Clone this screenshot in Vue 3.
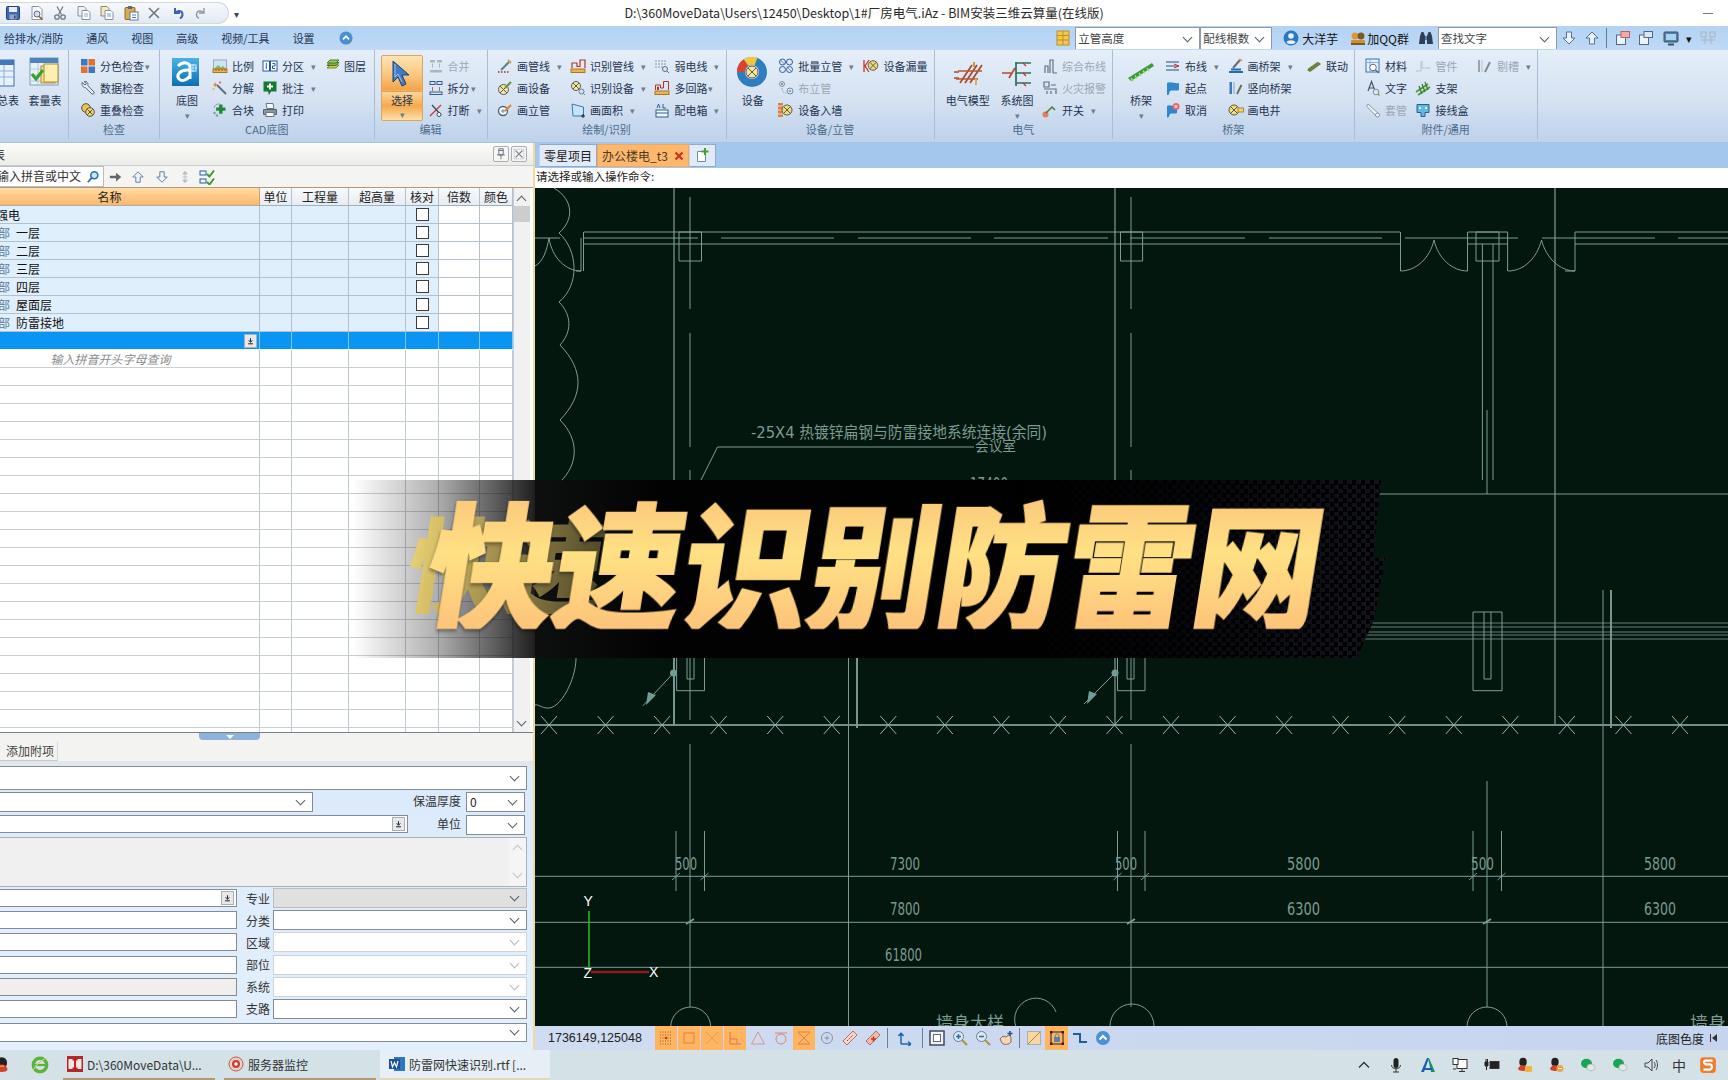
<script setup>
const S = {
  save: '<rect x="1.5" y="1.5" width="13" height="13" rx="1" fill="#4467ad" stroke="#24407c"/><rect x="4" y="2" width="8" height="5" fill="#e8eef8"/><rect x="4.5" y="9.5" width="7" height="5" fill="#8fa6cf"/><rect x="9" y="10.500" width="1.500" height="3" fill="#24407c"/>',
  preview: '<path d="M3 1.500h7l3 3v10H3z" fill="#fff" stroke="#8a94a3"/><circle cx="8" cy="9" r="3" fill="#cfe2f5" stroke="#5d6c80"/><path d="M10 11.500l3.500 3" stroke="#7a5b24" stroke-width="1.600"/>',
  cut: '<path d="M5 1.500l4.500 8M11 1.500l-4.500 8" stroke="#6f7883" stroke-width="1.200" fill="none"/><circle cx="5" cy="12" r="2.200" fill="none" stroke="#6f7883" stroke-width="1.300"/><circle cx="11" cy="12" r="2.200" fill="none" stroke="#6f7883" stroke-width="1.300"/>',
  copy: '<path d="M2 1.500h6l2 2V11H2z" fill="#eef2f6" stroke="#8892a0"/><path d="M6 5.500h6l2 2v7H6z" fill="#fff" stroke="#8892a0"/><path d="M8 9h4M8 11h4" stroke="#9aa6b4"/>',
  copy2: '<path d="M2 1.500h6l2 2V11H2z" fill="#f2e7bf" stroke="#8d8a70"/><path d="M6 5.500h6l2 2v7H6z" fill="#fff" stroke="#8892a0"/><path d="M8 9h4M8 11h4" stroke="#6a9acb"/>',
  paste: '<rect x="2" y="2.500" width="10" height="12" rx="1" fill="#d9ac4d" stroke="#8a6a24"/><rect x="5" y="1" width="4" height="3" fill="#5a6a78"/><rect x="7" y="7" width="8" height="8" fill="#fff" stroke="#5a7ca8"/><path d="M9 10h4M9 12.500h4" stroke="#5a7ca8"/>',
  del: '<path d="M3 3l10 10M13 3L3 13" stroke="#6d7885" stroke-width="1.600"/>',
  undo: '<path d="M5 3v5h5M5.500 7.500C8 5 12 5.500 12.500 9c.2 2-1 3.500-2.500 4.500" fill="none" stroke="#3b66a8" stroke-width="2"/>',
  redo: '<path d="M11 3v5H6M10.500 7.500C8 5 4 5.500 3.500 9c-.2 2 1 3.500 2.500 4.500" fill="none" stroke="#8f9aa8" stroke-width="1.400"/>',
  grid4: '<rect x="1" y="1" width="6.500" height="6.500" fill="#3d78c4"/><rect x="8.500" y="1" width="6.500" height="6.500" fill="#e5702b"/><rect x="1" y="8.500" width="6.500" height="6.500" fill="#e5702b"/><rect x="8.500" y="8.500" width="6.500" height="6.500" fill="#3d78c4"/>',
  wrench: '<path d="M2 2.500l3 2.500 1.500-1.500L4 1.500c2.500-.7 4.500 1.500 3.800 4L14 12c.7 1.500-.8 2.800-2 2L5.500 7.700C3.500 8 1.500 5.500 2 2.500z" fill="#e4ebf3" stroke="#56677c"/>',
  overlap: '<circle cx="6" cy="6" r="4.300" fill="#e8c65a" stroke="#52513a"/><circle cx="10" cy="10" r="4.300" fill="#f0d676" stroke="#52513a"/><path d="M7.500 7.500l5 5M12.500 7.500l-5 5" stroke="#52513a"/>',
  scale: '<rect x="1.500" y="2" width="13" height="9" fill="#cfe3f6" stroke="#9aa7b5"/><path d="M2 11l4-4 3 2.500 2-1.500 3 3z" fill="#8fb36a"/><rect x="1" y="11" width="14" height="3.500" fill="#eab54a" stroke="#a8782a"/><path d="M4 11v2M7 11v2M10 11v2M13 11v2" stroke="#8a5f1c"/>',
  wand: '<path d="M5 5l9 9" stroke="#5f6e80" stroke-width="2"/><path d="M3 2l1 2 2 .5-2 1-1 2-.8-2L1 4.500l1.500-.5z" fill="#e8862e"/><circle cx="8" cy="2.500" r=".9" fill="#d9432c"/><circle cx="1.500" cy="9" r=".9" fill="#e8b32e"/>',
  block: '<path d="M6 4h4v3.500h3.500v4H10V15H6v-3.500H2.500v-4H6z" fill="#208a3a" transform="translate(2 -1) scale(.85)"/><circle cx="2.500" cy="11" r="1.300" fill="#8d9aa8"/><circle cx="5" cy="13.500" r="1.300" fill="#8d9aa8"/><path d="M2 6c.5-3 3-4.500 6-4" fill="none" stroke="#8d9aa8"/>',
  nums: '<rect x="1" y="3" width="6.500" height="10" fill="#fff" stroke="#24579c"/><rect x="8.500" y="3" width="6.500" height="10" fill="#fff" stroke="#24579c"/><path d="M4.300 5v6M10.500 5.500h2.500v2.500h-2.500v2.500H13" fill="none" stroke="#24579c"/>',
  note: '<path d="M1.500 1.500h13v10H9l-2 3.500-1-3.500H1.500z" fill="#137a2e"/><path d="M7 3.500h2v2h2v2H9v2H7v-2H5v-2h2z" fill="#fff"/>',
  print: '<path d="M4 1.500h7l1 5H5z" fill="#f5f7fa" stroke="#6b7684"/><path d="M1.500 7.500h13v5h-13z" fill="#8a96a4" stroke="#566270"/><rect x="4" y="10.500" width="8" height="4" fill="#fff" stroke="#6b7684"/>',
  layer: '<path d="M3 10l3-3h9l-3 3z" fill="#e6c34a" stroke="#6f8a36"/><path d="M3 7.500l3-3h9l-3 3z" fill="#79b54a" stroke="#46762c"/><path d="M3 5l3-3h9l-3 3z" fill="#a4c95a" stroke="#46762c"/>',
  merge: '<rect x="2" y="2" width="5" height="2.500" fill="#a5adb7"/><rect x="9" y="2" width="5" height="2.500" fill="#a5adb7"/><rect x="2" y="12" width="12" height="2.500" fill="#a5adb7"/><path d="M4.500 5.500v4M11.500 5.500v4" stroke="#a5adb7"/>',
  split: '<rect x="2" y="1.500" width="5" height="3" fill="none" stroke="#2f5d98"/><rect x="9" y="1.500" width="5" height="3" fill="none" stroke="#2f5d98"/><path d="M4.500 7v4M11.500 7v4" stroke="#c2701e"/><rect x="2" y="12" width="12" height="2.500" fill="none" stroke="#2f5d98"/>',
  brk: '<path d="M2 14L13 3" stroke="#c5372a" stroke-width="1.300"/><path d="M4 3l9 10" stroke="#3c4a5c" stroke-width="1.300"/><circle cx="11" cy="12.500" r="2" fill="#fff" stroke="#3c4a5c"/>',
  pipe: '<path d="M4 12L13 3" stroke="#5b7f94" stroke-width="2"/><path d="M1 14h12" stroke="#a0272c" stroke-dasharray="1.500 1.500" stroke-width="1.500"/><path d="M11 2l3 3" stroke="#d9a23a" stroke-width="2"/>',
  dev: '<circle cx="6.500" cy="9.500" r="5" fill="#f0e3a5" stroke="#5b6058"/><path d="M3 6l7 7M10 6l-7 7" stroke="#5b6058"/><path d="M8 8L14 2" stroke="#6a9140" stroke-width="2"/>',
  riser: '<circle cx="6" cy="9" r="4.500" fill="#fff" stroke="#4f6175" stroke-width="1.300"/><circle cx="6" cy="9" r="1.800" fill="#8ea4ba"/><path d="M8 9l6-6" stroke="#d18a34" stroke-width="2"/>',
  ident: '<rect x="1" y="11" width="14" height="3.500" fill="#eab54a" stroke="#a8782a"/><path d="M2 10V5h5v3.500h3V2h5v8" fill="none" stroke="#b0372a" stroke-width="1.200"/>',
  identdev: '<circle cx="6" cy="6" r="4.500" fill="#f0e3a5" stroke="#5b6058"/><path d="M3 3l6 6M9 3l-6 6" stroke="#5b6058"/><circle cx="11.500" cy="11.500" r="2.500" fill="#cfe2f5" stroke="#6f7f92"/><path d="M13 13l2 2" stroke="#6f7f92"/>',
  area: '<path d="M2 2l11.500 3v9H3z" fill="#c8e2f7" stroke="#2f7fb4"/><path d="M13 12v4M11 14h4" stroke="#222"/>',
  weak: '<path d="M1 3h12M1 6h12M1 9h8" stroke="#8795a5" stroke-dasharray="2 1"/><circle cx="11" cy="11" r="2.500" fill="#dbe8f5" stroke="#5d6c80"/><path d="M13 13l2 2" stroke="#5d6c80"/>',
  circuit: '<rect x="1" y="11" width="14" height="3.500" fill="#eab54a" stroke="#a8782a"/><path d="M1.500 10V5h5v3h3V1.500h5V10M3.500 10V7h1v3" fill="none" stroke="#b0372a"/>',
  box: '<rect x="2" y="8" width="12" height="7" fill="#f3f8fd" stroke="#2d5f96"/><path d="M2 11h12" stroke="#2d5f96"/><path d="M3 6l1.500-4L6 6M9 2v4h3" fill="none" stroke="#2d5f96"/>',
  batch: '<circle cx="4.500" cy="4" r="3" fill="none" stroke="#2d5f96"/><circle cx="11.500" cy="4" r="3" fill="none" stroke="#2d5f96"/><circle cx="4.500" cy="11.500" r="3" fill="none" stroke="#2d5f96"/><circle cx="11.500" cy="11.500" r="3" fill="none" stroke="#2d5f96"/><path d="M2.500 2l4 4M9.500 9.500l4 4" stroke="#2d5f96" stroke-width=".7"/>',
  lay: '<circle cx="4" cy="4" r="2.500" fill="none" stroke="#7d8793"/><path d="M2.500 2.500l3 3M5.500 2.500l-3 3" stroke="#7d8793"/><circle cx="12" cy="11" r="3" fill="none" stroke="#5f7fa0"/><circle cx="12" cy="11" r="1" fill="#5f7fa0"/><path d="M4 8c0 3 1 5 4 5" fill="none" stroke="#7d8793" stroke-dasharray="1 1"/>',
  wall: '<rect x="0" y="1" width="5" height="14" fill="#d5824c"/><path d="M0 4h5M0 8h5M0 12h5" stroke="#f3d9c3"/><circle cx="9" cy="8" r="5" fill="#f0d976" stroke="#5b6058"/><path d="M5.500 4.500l7 7M12.500 4.500l-7 7" stroke="#5b6058"/>',
  leak: '<path d="M1 2v12M6 2L2 8l4 6" fill="none" stroke="#c5372a" stroke-width="1.300"/><circle cx="10" cy="7.500" r="4.800" fill="#f0d976" stroke="#5b6058"/><path d="M6.500 4l7 7M13.500 4l-7 7" stroke="#5b6058"/>',
  wiring: '<path d="M3 15V8h3v7M8 15V2h3v13M11 15h4" fill="none" stroke="#4b5b6e" stroke-width="1.200"/>',
  fire: '<path d="M2 2h5v5H2zM9 5h5M2 9h12v5M5 14V11M9 14v-3" fill="none" stroke="#4b5b6e" stroke-width="1.200"/>',
  switch: '<circle cx="3.500" cy="12.500" r="3" fill="#e77a62"/><path d="M4 11L10 5l3 3" fill="none" stroke="#4a7a3b" stroke-width="1.500"/>',
  run: '<path d="M1 4h13M1 8h13M1 12h13" stroke="#2b4f7a" stroke-width="1.200"/><path d="M9 6l5 2-5 2" fill="none" stroke="#c5372a"/>',
  flag: '<path d="M2 3c4-2 8 1 12 0v7c-3 1.500-6-.5-9 1l-1.500 4H2z" fill="#2f88cb"/>',
  cancel: '<path d="M2 4c3-2 6 1 10 0v7c-3 1.500-5-.5-7 1l-1.500 3.500H2z" fill="#2f88cb"/><circle cx="11" cy="4.500" r="3.500" fill="#e8636a"/><path d="M9.500 3l3 3M12.500 3l-3 3" stroke="#fff"/>',
  tray: '<path d="M1 14h14M3 11.500h10" stroke="#1f6cb3" stroke-width="1.800"/><path d="M5 10l7-8" stroke="#5d6c80" stroke-width="2"/><path d="M11 1l3 2" stroke="#d9a23a" stroke-width="2"/>',
  vtray: '<rect x="1.500" y="2" width="2.500" height="12" fill="#3f79bd"/><rect x="5" y="2" width="2" height="12" fill="#a5c6e8"/><path d="M9 14l4.500-9" stroke="#6d6d55" stroke-width="2"/>',
  well: '<circle cx="6" cy="8" r="5" fill="#f2dc7e" stroke="#575a47"/><path d="M2.500 4.500l7 7M9.500 4.500l-7 7" stroke="#575a47"/><rect x="10" y="6" width="5.500" height="4" fill="#f5d564" stroke="#a68a34"/>',
  link: '<path d="M1 12l11-8 3 2L4 14z" fill="#7d6a38"/><path d="M2 11l10-7M3.500 12.500L13.500 5" stroke="#5da049" stroke-width="1"/>',
  mat: '<rect x="1" y="1" width="13" height="13" fill="#e7f1fb" stroke="#3c6fa8"/><path d="M1 4.500h13M5 1v13" stroke="#8bb0d6"/><circle cx="8" cy="9.500" r="3.300" fill="#fff" stroke="#5f6d7d"/><path d="M10.500 12l3.500 3" stroke="#5f6d7d" stroke-width="1.500"/>',
  fit: '<path d="M1 13h5V3M7 3v7h8" fill="none" stroke="#b1bac5"/>',
  chisel: '<rect x="1" y="2" width="2" height="12" fill="#8e99a6"/><rect x="4" y="2" width="2" height="12" fill="#cbd3dc"/><path d="M8 14l5-10" stroke="#777b78" stroke-width="2"/>',
  txt: '<path d="M3 11L6.500 1.500 10 11M4.500 8h4" fill="none" stroke="#45566b" stroke-width="1.200"/><circle cx="11" cy="12" r="2.800" fill="#dbe8f5" stroke="#7f8c9a"/><path d="M13 14l1.500 1.500" stroke="#a58a3c" stroke-width="1.500"/>',
  rack: '<path d="M1 12L13 4M3 15L15 7" stroke="#4b9a3c" stroke-width="1.800"/><path d="M4 6l3 8M7 4l3 8M10 2l3 8" stroke="#3c7f2f" stroke-width="1.300"/>',
  sleeve: '<path d="M3 2l11 10-2.500 2.500L1.500 4z" fill="#f5f7fa" stroke="#7c8793"/><circle cx="12.500" cy="13" r="2" fill="#fff" stroke="#7c8793"/>',
  jbox: '<path d="M2 2.500h12v8H10v4H6v-4H2z" fill="#62bad8" stroke="#2d5f96"/><circle cx="5" cy="6" r="1" fill="#fff"/><circle cx="11" cy="6" r="1" fill="#fff"/>',
  search: '<circle cx="9.500" cy="6" r="4" fill="#cfe4f7" stroke="#1f6fb6" stroke-width="1.800"/><path d="M6.500 9L2 14" stroke="#1f6fb6" stroke-width="2"/>',
  arrR: '<path d="M1 6.500h7V3l6 5-6 5V9.500H1z" fill="#5e6873"/>',
  arrU: '<path d="M8 2l6 6h-3.500v6h-5V8H2z" fill="#eaf2fa" stroke="#53749a"/>',
  arrD: '<path d="M8 14l6-6h-3.500V2h-5v6H2z" fill="#eaf2fa" stroke="#53749a"/>',
  move: '<path d="M8 1.500l2.500 3h-5zM8 14.500l2.500-3h-5zM5 8h6M8 4v8" stroke="#b6bec8" fill="#b6bec8"/>',
  checks: '<rect x="1" y="2" width="6" height="4" fill="none" stroke="#1e62a4"/><rect x="1" y="10" width="6" height="4" fill="none" stroke="#1e62a4"/><path d="M8 5l2.500 2.500L15 1.500M8 13l2.500 2.500L15 9.500" fill="none" stroke="#3f9a2f" stroke-width="2"/>',
  user: '<circle cx="8" cy="8" r="7.500" fill="#2a78c4"/><circle cx="8" cy="6" r="2.800" fill="#e8f2fb"/><path d="M3.500 12.500C4.500 9.500 11.500 9.500 12.500 12.500 10 14.500 6 14.500 3.500 12.500z" fill="#e8f2fb"/>',
  qq: '<circle cx="5" cy="6" r="3.500" fill="#d99a3a"/><circle cx="11" cy="6" r="3.500" fill="#7d5a22"/><rect x="1" y="10" width="14" height="4.500" rx="1" fill="#c9902f"/><rect x="1" y="13" width="14" height="2" fill="#7d5a22"/>',
  bino: '<path d="M2 6l1.500-4h2L7 6v8H1zM14 6l-1.500-4h-2L9 6v8h6z" fill="#2f3f57"/><rect x="7" y="6" width="2" height="4" fill="#5b7fa8"/>',
  win1: '<rect x="1.500" y="5" width="9" height="9.500" fill="#eef3f8" stroke="#4e6a8d"/><rect x="6" y="1.500" width="8.500" height="6" fill="#f2a9a9" stroke="#b26666"/>',
  win2: '<rect x="1.500" y="5" width="9" height="9.500" fill="#eef3f8" stroke="#4e6a8d"/><rect x="6" y="1.500" width="8.500" height="6" fill="#dbe6f0" stroke="#4e6a8d"/>',
  mon: '<rect x="1" y="2" width="14" height="10" rx="1" fill="#597fa8" stroke="#3c4f66"/><rect x="3" y="4" width="10" height="6" fill="#a8d4f3"/><path d="M5 14.500h6" stroke="#3c4f66" stroke-width="2"/>',
  off: '<path d="M1 2h5v5H1zM10 2h5v5h-5zM1 10h14M5 7v7M11 7v7" fill="none" stroke="#aab4c0"/>',
  comboIcon: '<rect x="2" y="1" width="12" height="14" fill="#f2c94f" stroke="#c28c26"/><path d="M2 5.500h12M2 10h12M8 1v14" stroke="#c28c26"/>',
  close: '<path d="M4 4l8 8M12 4l-8 8" stroke="#c9341f" stroke-width="2.600"/>',
  newTab: '<path d="M2.500 3.500h8v10h-8z" fill="#fff" stroke="#6d8daf"/><path d="M10 0v7M6.500 3.500h7" stroke="#4a9b3a" stroke-width="2"/>',
  pin: '<path d="M5.500 2h5v7h-5zM3.500 9h9M8 9v5M5.500 4h5" fill="none" stroke="#5d6875"/>',
  xbox: '<path d="M4 4l8 8M12 4l-8 8" stroke="#7e8996" stroke-width="1.300"/><path d="M2.500 2.500h11v11h-11z" fill="none" stroke="#a8b2bd" stroke-dasharray="1.500 1"/>',
}
const L = {
  total: '<rect x="1" y="3" width="30" height="26" fill="#e7f1fb" stroke="#3c6fa8"/><rect x="1" y="3" width="30" height="5" fill="#3f79bd"/><path d="M1 14h30M1 20h30M11 8v21M21 8v21" stroke="#8bb0d6"/><path d="M20 11h-9v12h9M11 17h7" fill="none" stroke="#222" stroke-width="2.500" transform="translate(-4 -2)"/>',
  list: '<rect x="1" y="1" width="28" height="27" fill="#e9f1f8" stroke="#7b9bbd"/><rect x="1" y="1" width="28" height="5" fill="#4e84b8"/><path d="M1 12h28M1 18h28M1 24h28M9 6v22" stroke="#b4c9dc"/><rect x="12" y="9" width="14" height="17" fill="#f4e499" stroke="#b08a2c"/><rect x="15" y="7" width="14" height="18" fill="#fbefb3" stroke="#b08a2c"/><path d="M3 17l4 5 7-9" fill="none" stroke="#37a02f" stroke-width="3"/>',
  cad: '<defs><linearGradient id="cadg" x1="0" y1="0" x2="0" y2="1"><stop offset="0" stop-color="#4ab2e3"/><stop offset="1" stop-color="#0d6fb4"/></linearGradient></defs><rect x="1" y="1" width="27" height="28" fill="url(#cadg)"/><path d="M7 9c5-5 13-4 12 3v10M19 13C9 12 5 18 8 22c3 3 8 1 11-3" fill="none" stroke="#fff" stroke-width="3"/><path d="M18 11h8M22 7v8" stroke="#bfe5f7"/><rect x="19" y="8" width="6" height="6" fill="none" stroke="#dff3fb"/>',
  cursor: '<path d="M7 2v21l5-5 4 9 4-2-4-9h7z" fill="#3f7cc6" stroke="#1f3f6f"/><path d="M9 5v13l3-3 4 8" fill="none" stroke="#9cc4ea"/>',
  device: '<circle cx="15" cy="15" r="11" fill="none" stroke="#2e7dbf" stroke-width="8"/><path d="M4 15a11 11 0 0 1 5-9.500" fill="none" stroke="#d8452f" stroke-width="8"/><path d="M9 5.500A11 11 0 0 1 19 4.500" fill="none" stroke="#f2c63e" stroke-width="8"/><circle cx="15" cy="15" r="6" fill="#f5e7a3" stroke="#565a4a"/><path d="M11 11l8 8M19 11l-8 8" stroke="#565a4a"/>',
  model: '<path d="M2 15h5M2 21h5M8 26L20 8M13 26L25 8M18 26L30 8" stroke="#a84a2a" stroke-width="1.700" fill="none"/><path d="M6 14h24M4 22h22" stroke="#b65a32" stroke-width="1.700"/><path d="M22 5v5" stroke="#c79a3f" stroke-width="2"/><path d="M24 22v6" stroke="#d8b34f" stroke-width="2"/>',
  system: '<path d="M1 16h9M8 21L14 11" stroke="#b84a2a" stroke-width="1.700"/><path d="M15 5v24M15 6h15M15 16h15M15 26h15" stroke="#2f6e5a" stroke-width="1.700" fill="none"/><path d="M22 6l3 3M22 16l3 3M22 26l3 3" stroke="#c5372a" stroke-width="1.400"/>',
  bridge: '<path d="M3 21L27 6l2 3L6 24z" fill="#3c9a3c"/><path d="M6 21l2 3M10 18.500l2 3M14 16l2 3M18 13.500l2 3M22 11l2 3" stroke="#a5dc7a" stroke-width="1.400"/>',
}
const groups = [
  { w: 69, label: '', cols: [
    { w: 27, large: { t: '总表', i: 'total', cut: true } },
    { w: 36, large: { t: '套量表', i: 'list' } } ] },
  { w: 91, pad: 11, label: '检查', cols: [ { w: 80, items: [
    { t: '分色检查', i: 'grid4', c: 'tight' }, { t: '数据检查', i: 'wrench' }, { t: '重叠检查', i: 'overlap' } ] } ] },
  { w: 214.5, pad: 2, label: 'CAD底图', cols: [
    { w: 50, large: { t: '底图', i: 'cad', c: true } },
    { w: 50, items: [ { t: '比例', i: 'scale' }, { t: '分解', i: 'wand' }, { t: '合块', i: 'block' } ] },
    { w: 62, items: [ { t: '分区', i: 'nums', c: 'far' }, { t: '批注', i: 'note', c: 'far' }, { t: '打印', i: 'print' } ] },
    { w: 50, items: [ { t: '图层', i: 'layer' } ] } ] },
  { w: 113, pad: 6.500, label: '编辑', cols: [
    { w: 46.500, select: true },
    { w: 60, items: [ { t: '合并', i: 'merge', off: true }, { t: '拆分', i: 'split', c: 'tight' }, { t: '打断', i: 'brk', c: 'far' } ] } ] },
  { w: 239, pad: 9.400, label: '绘制/识别', cols: [
    { w: 73, items: [ { t: '画管线', i: 'pipe', c: 'far' }, { t: '画设备', i: 'dev' }, { t: '画立管', i: 'riser' } ] },
    { w: 84.500, items: [ { t: '识别管线', i: 'ident', c: 'far' }, { t: '识别设备', i: 'identdev', c: 'far' }, { t: '画面积', i: 'area', c: 'far' } ] },
    { w: 70, items: [ { t: '弱电线', i: 'weak', c: 'far' }, { t: '多回路', i: 'circuit', c: 'tight' }, { t: '配电箱', i: 'box', c: 'far' } ] } ] },
  { w: 208, pad: 1, label: '设备/立管', cols: [
    { w: 50.700, large: { t: '设备', i: 'device' } },
    { w: 85.300, items: [ { t: '批量立管', i: 'batch', c: 'far' }, { t: '布立管', i: 'lay', off: true }, { t: '设备入墙', i: 'wall' } ] },
    { w: 68, items: [ { t: '设备漏量', i: 'leak' } ] } ] },
  { w: 178.500, pad: 9, label: '电气', cols: [
    { w: 48.600, large: { t: '电气模型', i: 'model' } },
    { w: 50, large: { t: '系统图', i: 'system', c: true } },
    { w: 70, items: [ { t: '综合布线', i: 'wiring', off: true }, { t: '火灾报警', i: 'fire', off: true }, { t: '开关', i: 'switch', c: 'far' } ] } ] },
  { w: 241.500, pad: 4, label: '桥架', cols: [
    { w: 48, large: { t: '桥架', i: 'bridge', c: true } },
    { w: 62.500, items: [ { t: '布线', i: 'run', c: 'far' }, { t: '起点', i: 'flag' }, { t: '取消', i: 'cancel' } ] },
    { w: 78.500, items: [ { t: '画桥架', i: 'tray', c: 'far' }, { t: '竖向桥架', i: 'vtray' }, { t: '画电井', i: 'well' } ] },
    { w: 45, items: [ { t: '联动', i: 'link' } ] } ] },
  { w: 183.400, pad: 10.400, label: '附件/通用', cols: [
    { w: 50.500, items: [ { t: '材料', i: 'mat' }, { t: '文字', i: 'txt' }, { t: '套管', i: 'sleeve', off: true } ] },
    { w: 61.500, items: [ { t: '管件', i: 'fit', off: true }, { t: '支架', i: 'rack' }, { t: '接线盒', i: 'jbox' } ] },
    { w: 60, items: [ { t: '剔槽', i: 'chisel', off: true, c: 'far' } ] } ] },
]
const quick = ['save', 'preview', 'cut', 'copy', 'copy2', 'paste', 'del', 'undo', 'redo']
const menu = ['给排水/消防', '通风', '视图', '高级', '视频/工具', '设置']
const heads = ['单位', '工程量', '超高量', '核对', '倍数', '颜色']
const named = [
  { n: '强电', first: true }, { n: '部 一层' }, { n: '部 二层' }, { n: '部 三层' },
  { n: '部 四层' }, { n: '部 屋面层' }, { n: '部 防雷接地' },
]
const blanks = Array.from({ length: 21 }, (_, i) => i)
const fields = [
  { l: '专业', kind: 'disabled', btn: true }, { l: '分类', kind: '' }, { l: '区域', kind: 'muted' },
  { l: '部位', kind: 'muted' }, { l: '系统', kind: 'muted', gray: true }, { l: '支路', kind: '' },
]
const snaps = [
  { on: true, d: 'dots' }, { on: true, d: 'sq' }, { on: true, d: 'x' }, { on: true, d: 'ell' },
  { d: 'tri' }, { d: 'cir' }, { on: true, d: 'hour' }, { d: 'plus' }, { d: 'slash' }, { d: 'slash2' },
]
const snapSvg = {
  dots: '<path d="M2 2h12M2 5h12M2 8h12M2 11h12M2 14h12" stroke="#a8552a" stroke-dasharray="1 1.500"/><circle cx="8" cy="8" r="1.300" fill="#c9301f"/>',
  sq: '<rect x="3" y="3" width="10" height="10" fill="none" stroke="#e08240"/>',
  x: '<path d="M2 2l12 12M14 2L2 14" stroke="#e79a5e"/>',
  ell: '<path d="M3 2v12h11M3 9h7v5" fill="none" stroke="#dd7c3c"/>',
  tri: '<path d="M8 2l6.500 12h-13z" fill="none" stroke="#d29a86"/>',
  cir: '<circle cx="8" cy="9" r="5" fill="none" stroke="#d08a70"/><path d="M2 3h12" stroke="#d08a70"/>',
  hour: '<path d="M2 2h12L2 14h12z" fill="none" stroke="#e0824c"/>',
  plus: '<circle cx="8" cy="8" r="5.500" fill="none" stroke="#8993a3"/><path d="M5.500 8h5M8 5.500v5" stroke="#8993a3"/>',
  slash: '<path d="M1 11L11 1l4 4L5 15z" fill="#f4d8cf" stroke="#b0745e"/><path d="M5 11l6-6" stroke="#c2372a" stroke-dasharray="2 1"/>',
  slash2: '<path d="M1 11L11 1l4 4L5 15z" fill="#f2b7ae" stroke="#b0745e"/><path d="M6 9h5M8.500 6.500v5" stroke="#c2372a" stroke-width="1.500"/>',
}
const views = [
  { sep: true, first: true },
  { s: '<path d="M4 14V3M4 3L1.500 6M4 3l2.500 3M4 14h10M14 14l-3-2.500M14 14l-3 2.500" fill="none" stroke="#1f66a8" stroke-width="1.500"/>', w: 30 },
  { sep: true },
  { s: '<rect x="1" y="1" width="14" height="14" fill="#f0f3f6" stroke="#3f4a57" stroke-width="1.500"/><rect x="4.500" y="4.500" width="7" height="7" fill="#fff" stroke="#5f6a76"/>', w: 23 },
  { s: '<circle cx="6.500" cy="6.500" r="5" fill="#dbe9f6" stroke="#6f7d8d"/><path d="M4 6.500h5M6.500 4v5" stroke="#2a6cb0" stroke-width="1.500"/><path d="M10 10l5 5" stroke="#b48f3d" stroke-width="2"/>', w: 23 },
  { s: '<circle cx="6.500" cy="6.500" r="5" fill="#dbe9f6" stroke="#6f7d8d"/><path d="M4 6.500h5" stroke="#2a6cb0" stroke-width="1.500"/><path d="M10 10l5 5" stroke="#b48f3d" stroke-width="2"/>', w: 23 },
  { s: '<path d="M2 9l3-3 3 1 3-2 2 2v5c-2 3-7 3-9 1z" fill="#f1d7b4" stroke="#8a6c4d"/><path d="M12 1v5M9.500 3.500h5" stroke="#1f4f8a" stroke-width="1.500"/>', w: 23 },
  { sep: true },
  { s: '<rect x="1.500" y="1.500" width="13" height="13" fill="#f5d8a0" stroke="#7b8794" stroke-dasharray="1 1"/><path d="M14 2L2 14" stroke="#c07b3a"/>', w: 23 },
  { s: '<rect x="2" y="2" width="12" height="12" fill="none" stroke="#222"/><rect x="1" y="1" width="2.500" height="2.500" fill="#5a1010"/><rect x="12.500" y="1" width="2.500" height="2.500" fill="#5a1010"/><rect x="1" y="12.500" width="2.500" height="2.500" fill="#5a1010"/><rect x="12.500" y="12.500" width="2.500" height="2.500" fill="#5a1010"/><rect x="5" y="7" width="6" height="5" fill="#5c7fa8"/><path d="M6.300 7V5.500a1.700 1.700 0 0 1 3.400 0V7" fill="none" stroke="#5c7fa8"/>', w: 23, on: true },
  { s: '<path d="M1 4h7v8h7" fill="none" stroke="#1f5f96" stroke-width="2"/>', w: 23 },
  { s: '<circle cx="8" cy="8" r="7" fill="#4a90d4"/><path d="M4.500 9.500L8 6l3.500 3.500" fill="none" stroke="#fff" stroke-width="2"/>', w: 23 },
]
const tray = [
  { s: '<path d="M3 10.500L8 5.500l5 5" fill="none" stroke="#333" stroke-width="1.300"/>' },
  { s: '<rect x="5.500" y="1" width="5" height="10" rx="2.500" fill="#222"/><path d="M3.500 8c0 5 9 5 9 0M8 12v3M5 15h6" fill="none" stroke="#333"/>' },
  { s: '<path d="M1 15L7 1h2l-5 14z" fill="#1c5fb0"/><path d="M8 1h1l6 14h-4z" fill="#179065"/><path d="M4 12h8" stroke="#1c5fb0" stroke-width="2"/>' },
  { s: '<rect x="5" y="2.500" width="10" height="9" fill="#fff" stroke="#333"/><rect x="1" y="1.500" width="5" height="6" fill="#fff" stroke="#333"/><path d="M10 11.500v3M7 14.500h6M1 12h3" stroke="#333"/>' },
  { s: '<path d="M1 5v3c0 2 3 2 3 0V5zM2 2v3M3.500 2v3M2.500 10v3" stroke="#222" fill="#222"/><rect x="6" y="4.500" width="9" height="7" fill="#222" stroke="#333"/>' },
  { s: '<ellipse cx="7" cy="5" rx="3.700" ry="4.300" fill="#222"/><path d="M2 12c1-5 9-5 10 0-1 2.500-9 2.500-10 0z" fill="#d5402c"/><rect x="9" y="9" width="7" height="6" rx="1" fill="#efb53a"/>' },
  { s: '<ellipse cx="7" cy="5" rx="3.700" ry="4.300" fill="#222"/><path d="M2 12c1-5 9-5 10 0-1 2.500-9 2.500-10 0z" fill="#d5402c"/><circle cx="12" cy="11.500" r="3.500" fill="#f0a33e"/><path d="M10 11.500h4" stroke="#fff"/>' },
  { s: '<ellipse cx="6.500" cy="6.500" rx="5.500" ry="4.700" fill="#18a558"/><ellipse cx="11" cy="10.500" rx="4" ry="3.300" fill="#dfe8e6" stroke="#b7c3c0"/>' },
  { s: '<ellipse cx="6.500" cy="6.500" rx="5.500" ry="4.700" fill="#18a558"/><ellipse cx="11" cy="10.500" rx="4" ry="3.300" fill="#dfe8e6" stroke="#b7c3c0"/>' },
]
const xmarks = []
for (let i = 0; i < 21; i++) xmarks.push(549 + i * 56.55)
const ticks = [676, 704.5, 1117.5, 1145, 1473, 1501.5]
const dimTexts = [
  { t: '500', x: 675, y: 870, w: 22 }, { t: '7300', x: 890, y: 870, w: 30 }, { t: '500', x: 1115, y: 870, w: 22 },
  { t: '5800', x: 1287, y: 870, w: 33 }, { t: '500', x: 1471, y: 870, w: 23 }, { t: '5800', x: 1644, y: 870, w: 32 },
  { t: '7800', x: 890, y: 915, w: 30 }, { t: '6300', x: 1287, y: 915, w: 33 }, { t: '6300', x: 1644, y: 915, w: 32 },
  { t: '61800', x: 885, y: 961, w: 37 },
  { t: '-25X4 热镀锌扁钢与防雷接地系统连接(余同)', x: 751, y: 438, w: 296, fs: 16 },
  { t: '会议室', x: 975, y: 451, w: 41, fs: 14 }, { t: '17400', x: 970, y: 490, w: 38 },
  { t: '墙身大样', x: 936, y: 1029, w: 68, fs: 17 }, { t: '墙身', x: 1690, y: 1029, w: 36, fs: 17 },
]
const multi = [623, 627, 632, 635, 639]
const cad = `M584 232H1400M584 244H1400M1575 232H1728M1575 244H1728M584 238H698M721 238H834M858 238H971M994 238H1108M1130 238H1245M1269 238H1382M1405 238H1518M1542 238H1575M1575 238H1655M1678 238H1728
M583.500 232V271M581 238V271H576M535 238H560M679 232H701.500V261H679ZM1120.500 232H1142.600V261H1120.500ZM690 197V309M690 333V447M690 470V480M1131 197V309M1131 333V447M1131 470V480
M1400.500 232V271M1467.500 232V271M1468 232H1507.600V271M1468 244H1507.600M1476 232H1499V261H1476ZM1482.400 244V480M1493 244V480M1575 232V271H1565M1400.500 271C1416 271 1430 258 1434 240C1438 258 1452 271 1467.500 271M1508 271C1524 271 1537 258 1541.500 240C1546 258 1560 271 1575 271M1487 410V494M1378 494H1728
M554 188C574 200 574 220 559 233C578 250 580 285 559 302C572 315 572 332 560 345C584 370 584 395 560 420C580 440 578 465 560 482M576 658C576 680 560 710 547 708C542 708 538 704 535 705M549 238C552 258 566 271 581 271M549 238C547 250 543 262 535 266
M717.500 447H974M717.500 447L700 482
M848.500 650V1026M857 650V728M690 650V720M690 744V1007M676.600 650V690.700H704.500V650M687 650V679H694V650M1131 650V720M1131 744V1007M1117.500 650V690.700H1145V650M1127 650V679H1134V650M1473 612V690.700H1502V612ZM1484 612V679H1491V612M1487 781V1007M1603 590V1026M1611 590V728
M673.500 673L643 705.700M1115 673L1084 704
M535 876.300H1728M535 922.300H1728M535 967.300H1728
M670.700 1027A20 20 0 0 1 710.700 1027M1016 1027A20 20 0 0 1 1056 1012M1110 1026A21 21 0 0 1 1154 1026M1467 1027A20 20 0 0 1 1507 1027`
</script>

<template>
  <div class="app">
    <header class="titlebar">
      <div class="quick">
        <svg v-for="q in quick" :key="q" class="i16" viewBox="0 0 16 16" v-html="S[q]"></svg>
        <span class="quick-caret">▾</span>
      </div>
      <div class="title-text">D:\360MoveData\Users\12450\Desktop\1#厂房电气.iAz - BIM安装三维云算量(在线版)</div>
      <div class="minimize"><span></span></div>
    </header>

    <nav class="menubar">
      <div class="menu-left">
        <span v-for="m in menu" :key="m">{{ m }}</span>
        <svg class="i14" viewBox="0 0 16 16"><circle cx="8" cy="8" r="7.500" fill="#4a8fd0"/><path d="M4.500 9.500L8 6l3.500 3.500" fill="none" stroke="#fff" stroke-width="2"/></svg>
      </div>
      <div class="menu-right">
        <svg class="i16" viewBox="0 0 16 16" v-html="S.comboIcon"></svg>
        <div class="combo c1">立管高度<i class="chev"></i></div>
        <div class="combo c2">配线根数<i class="chev"></i></div>
        <svg class="i16 m11" viewBox="0 0 16 16" v-html="S.user"></svg>
        <span class="m3">大洋芋</span>
        <svg class="i16 m12" viewBox="0 0 16 16" v-html="S.qq"></svg>
        <span class="m1">加QQ群</span>
        <svg class="i16 m9" viewBox="0 0 16 16" v-html="S.bino"></svg>
        <div class="combo c3">查找文字<i class="chev"></i></div>
        <svg class="i16 m4" viewBox="0 0 16 16" v-html="S.arrD"></svg>
        <svg class="i16 m7" viewBox="0 0 16 16" v-html="S.arrU"></svg>
        <i class="menu-sep"></i>
        <svg class="i16 m8" viewBox="0 0 16 16" v-html="S.win1"></svg>
        <svg class="i16 m7" viewBox="0 0 16 16" v-html="S.win2"></svg>
        <svg class="i16 m9" viewBox="0 0 16 16" v-html="S.mon"></svg>
        <span class="menu-caret">▾</span>
        <svg class="i16 m4" viewBox="0 0 16 16" v-html="S.off"></svg>
      </div>
    </nav>

    <section class="ribbon">
      <div v-for="(g, gi) in groups" :key="gi" class="group" :style="{ width: g.w + 'px' }">
        <div class="g-body" :style="{ paddingLeft: (g.pad || 0) + 'px' }">
          <div v-for="(c, ci) in g.cols" :key="ci" class="col" :style="{ width: c.w + 'px' }">
            <div v-if="c.select" class="select-btn">
              <svg class="i32 sel-icon" viewBox="0 0 32 32" v-html="L.cursor"></svg>
              <div class="sel-text">选择<b class="caret low">▾</b></div>
            </div>
            <div v-else-if="c.large" class="large" :class="{ cut: c.large.cut }">
              <svg class="i32" viewBox="0 0 32 32" v-html="L[c.large.i]"></svg>
              <span>{{ c.large.t }}</span>
              <b v-if="c.large.c" class="caret low">▾</b>
            </div>
            <template v-else>
              <div v-for="it in c.items" :key="it.t" class="small" :class="{ off: it.off }">
                <svg class="i16" viewBox="0 0 16 16" v-html="S[it.i]"></svg>
                <span>{{ it.t }}</span>
                <b v-if="it.c" class="caret" :class="it.c">▾</b>
              </div>
            </template>
          </div>
        </div>
        <div class="g-label">{{ g.label }}</div>
      </div>
    </section>

    <main class="work">
      <aside class="panel">
        <div class="panel-head">
          <span class="panel-title">表</span>
          <div class="panel-btns">
            <svg class="i14 framed" viewBox="0 0 16 16" v-html="S.pin"></svg>
            <svg class="i14 framed" viewBox="0 0 16 16" v-html="S.xbox"></svg>
          </div>
        </div>
        <div class="search-row">
          <div class="search-box"><span>输入拼音或中文</span><svg class="i14" viewBox="0 0 16 16" v-html="S.search"></svg></div>
          <svg class="i14 t1" viewBox="0 0 16 16" v-html="S.arrR"></svg>
          <svg class="i14 t2" viewBox="0 0 16 16" v-html="S.arrU"></svg>
          <svg class="i14 t3" viewBox="0 0 16 16" v-html="S.arrD"></svg>
          <svg class="i14 t4" viewBox="0 0 16 16" v-html="S.move"></svg>
          <svg class="i16 t5" viewBox="0 0 16 16" v-html="S.checks"></svg>
        </div>

        <div class="table-wrap">
          <div class="table">
            <div class="row head">
              <div class="cell name">名称</div>
              <div v-for="h in heads" :key="h" class="cell">{{ h }}</div>
            </div>
            <div v-for="r in named" :key="r.n" class="row tinted">
              <div class="cell name left" :class="{ first: r.first }"><em v-if="!r.first">部</em>{{ r.first ? r.n : r.n.slice(2) }}</div>
              <div class="cell"></div><div class="cell"></div><div class="cell"></div>
              <div class="cell"><i class="check"></i></div>
              <div class="cell blank"></div><div class="cell blank"></div>
            </div>
            <div class="row active">
              <div class="cell name"><span class="drop-btn"><svg viewBox="0 0 10 10"><path d="M5 1v5M2.500 4L5 7l2.500-3M1.500 9h7" fill="none" stroke="#111" stroke-width="1.300"/></svg></span></div>
              <div v-for="h in heads" :key="h" class="cell"></div>
            </div>
            <div class="row plain">
              <div class="cell name hint">输入拼音开头字母查询</div>
              <div v-for="h in heads" :key="h" class="cell"></div>
            </div>
            <div v-for="b in blanks" :key="b" class="row plain">
              <div class="cell name"></div>
              <div v-for="h in heads" :key="h" class="cell"></div>
            </div>
          </div>
          <div class="vscroll">
            <i class="chev up"></i>
            <div class="thumb"></div>
            <i class="chev bottom"></i>
          </div>
        </div>

        <div class="tabs-row">
          <div class="splitter"><b></b></div>
          <span class="addon">添加附项</span>
        </div>

        <div class="form">
          <div class="sel full h24"><i class="chev"></i></div>
          <div class="line l2">
            <div class="sel w315 h20"><i class="chev"></i></div>
            <label>保温厚度</label>
            <div class="sel mini h20"><span>0</span><i class="chev"></i></div>
          </div>
          <div class="line l3">
            <div class="sel w410 h18"><span class="drop-btn"><svg viewBox="0 0 10 10"><path d="M5 1v5M2.500 4L5 7l2.500-3M1.500 9h7" fill="none" stroke="#111" stroke-width="1.300"/></svg></span></div>
            <label>单位</label>
            <div class="sel mini h20"><i class="chev"></i></div>
          </div>
          <div class="memo"><div class="memo-bar"><i class="chev up"></i><i class="chev"></i></div></div>
          <div class="fields">
            <div v-for="f in fields" :key="f.l" class="field">
              <div class="inp" :class="{ gray: f.gray }"><span v-if="f.btn" class="drop-btn"><svg viewBox="0 0 10 10"><path d="M5 1v5M2.500 4L5 7l2.500-3M1.500 9h7" fill="none" stroke="#111" stroke-width="1.300"/></svg></span></div>
              <label>{{ f.l }}</label>
              <div class="sel grow" :class="f.kind"><i class="chev"></i></div>
            </div>
          </div>
          <div class="sel full h20 last"><i class="chev"></i></div>
        </div>
      </aside>

      <div class="divider"></div>

      <section class="doc">
        <div class="doc-tabs">
          <div class="doc-tab">零星项目</div>
          <div class="doc-tab on">办公楼电_t3<svg class="i14" viewBox="0 0 16 16" v-html="S.close"></svg></div>
          <div class="doc-tab add"><svg class="i16" viewBox="0 0 16 16" v-html="S.newTab"></svg></div>
        </div>
        <div class="cmd">请选择或输入操作命令:</div>
        <div class="canvas">
          <svg class="cad" viewBox="535 188 1193 838" preserveAspectRatio="none">
            <path :d="cad" fill="none" stroke="#7f9d93" stroke-width="1"/>
            <path d="M674 188V725M1115 188V725M1555 188V725" fill="none" stroke="#7f9d93" stroke-width="1.200"/>
            <path d="M535 725H1728" stroke="#6f9189" stroke-width="2"/>
            <path d="M674 650V725M857 650V728M1611 590V728" stroke="#7f9d93" stroke-width="1.800"/>
            <template v-for="x in xmarks" :key="x">
              <path :d="`M${x - 8} 716L${x + 8} 734M${x + 8} 716L${x - 8} 734`" stroke="#9ab3aa" stroke-width="1" fill="none"/>
            </template>
            <template v-for="x in ticks" :key="x">
              <path :d="`M${x} 831V891M${x - 4} 880L${x + 4} 873`" stroke="#7f9d93" fill="none"/>
            </template>
            <path v-for="x in multi" :key="x" :d="`M1361 ${x}H1728`" stroke="#7f9d93" stroke-width=".8"/>
            <circle cx="673.500" cy="673" r="3.500" fill="#6f9c95"/>
            <circle cx="1115" cy="673" r="3.500" fill="#6f9c95"/>
            <path d="M648 692l8 3-10 10zM1089 691l8 3-10 10z" fill="#6f9c95"/>
            <path d="M686 924l8-5M1127 924l8-5M1483 924l8-5" stroke="#7f9d93" stroke-width="1.800"/>
            <text v-for="d in dimTexts" :key="d.t + d.x" class="dim" :x="d.x" :y="d.y" :textLength="d.w" lengthAdjust="spacingAndGlyphs" :font-size="d.fs || 18">{{ d.t }}</text>
            <path d="M589 911V968" stroke="#29b326" stroke-width="1.600"/>
            <path d="M591 972H649" stroke="#8a1f1c" stroke-width="2.400"/>
            <text class="axis" x="583.500" y="906">Y</text>
            <text class="axis" x="583.500" y="978">Z</text>
            <text class="axis" x="649" y="977">X</text>
          </svg>
        </div>
        <div class="status">
          <span class="coords">1736149,125048</span>
          <div class="snaps">
            <span v-for="(s, i) in snaps" :key="i" class="snap" :class="{ on: s.on }"><svg class="i16" viewBox="0 0 16 16" v-html="snapSvg[s.d]"></svg></span>
          </div>
          <template v-for="(v, i) in views" :key="i">
            <i v-if="v.sep" class="stat-sep" :class="{ lead: v.first }"></i>
            <span v-else class="view" :class="{ on: v.on }" :style="{ width: v.w + 'px' }"><svg class="i16" viewBox="0 0 16 16" v-html="v.s"></svg></span>
          </template>
          <span class="tone">底图色度<svg viewBox="0 0 10 10"><path d="M1.500 1v8" stroke="#333"/><path d="M8 1v8L3 5z" fill="#333"/></svg></span>
        </div>
      </section>
    </main>

    <footer class="taskbar">
      <svg class="i18 peng" viewBox="0 0 16 16"><ellipse cx="8" cy="6" rx="4.500" ry="5" fill="#222"/><path d="M3 12c1-6 9-6 10 0-1 3-9 3-10 0z" fill="#d5402c"/><path d="M6 9h4" stroke="#f2b431"/></svg>
      <svg class="i18 ie" viewBox="0 0 16 16"><circle cx="8" cy="8" r="6" fill="none" stroke="#5bb43a" stroke-width="3"/><path d="M3 8h10" stroke="#5bb43a" stroke-width="2"/><path d="M2 13c2-6 8-10 12-11" fill="none" stroke="#b9d88c"/></svg>
      <div class="task t-a">
        <svg class="i16" viewBox="0 0 16 16"><rect width="16" height="16" fill="#b5252a"/><rect x="1.500" y="3" width="13" height="10" fill="#f6e6e0"/><path d="M8 3.500v9M5.500 3.500h5M5.500 12.500h5" stroke="#b5252a" stroke-width="2"/></svg>
        <span>D:\360MoveData\U...</span>
      </div>
      <div class="task t-b">
        <svg class="i16" viewBox="0 0 16 16"><circle cx="8" cy="8" r="7" fill="#e9cfc8" stroke="#c45a4c"/><circle cx="8" cy="8" r="4" fill="#c9402e"/><circle cx="8" cy="8" r="1.800" fill="#fff"/></svg>
        <span>服务器监控</span>
      </div>
      <div class="task t-c">
        <svg class="i16" viewBox="0 0 16 16"><rect x="5" y="1" width="11" height="14" fill="#2a78c4"/><rect x="0" y="3" width="11" height="10" fill="#1c4f9c"/><path d="M2 5l1.500 6L5.500 6.500 7.500 11 9 5" fill="none" stroke="#fff" stroke-width="1.200"/></svg>
        <span>防雷网快速识别.rtf [...</span>
      </div>
      <div class="tray">
        <span v-for="(t, i) in tray" :key="i" class="tray-i"><svg class="i16" viewBox="0 0 16 16" v-html="t.s"></svg></span>
        <span class="tray-i narrow2"><svg class="i16" viewBox="0 0 16 16"><path d="M2 6h3l4-4v12l-4-4H2zM11 5c1.500 2 1.500 4 0 6M13 3c2 3 2 7 0 10" fill="none" stroke="#444"/></svg></span>
        <span class="tray-i narrow ime">中</span>
        <span class="tray-i"><svg class="i18" viewBox="0 0 16 16"><rect x="1" y="1" width="14" height="14" rx="3" fill="#ee7d2e"/><path d="M12 4H6C4 4 4 7 6 7.500h4c2 .5 2 4 0 4.500H4" fill="none" stroke="#fff" stroke-width="2"/></svg></span>
      </div>
    </footer>

    <div class="banner">
      <div class="banner-bg"></div>
      <div class="headline">
        <span class="ghost" aria-hidden="true">快速</span>
        <h1 class="title">快速识别防雷网</h1>
      </div>
    </div>
  </div>
</template>

<style>
html, body { margin: 0; background: #fff; }
</style>

<style scoped>
.app { position: relative; width: 1728px; height: 1080px; overflow: hidden; display: flex; flex-direction: column; font-family: "Noto Sans CJK SC", "Liberation Sans", sans-serif; font-size: 12px; color: #222; background: #fff; }
.i14 { width: 14px; height: 14px; flex: none; display: block; }
.i16 { width: 16px; height: 16px; flex: none; display: block; }
.i18 { width: 18px; height: 18px; flex: none; display: block; }
.i32 { width: 32px; height: 32px; flex: none; display: block; }

.titlebar { height: 26px; flex: none; display: grid; grid-template-columns: 1fr auto 1fr; align-items: center; background: #fff; }
.quick { width: 229px; height: 22px; box-sizing: border-box; padding-left: 5px; display: flex; align-items: center; gap: 7.500px; background: linear-gradient(#f7f9fc, #e3eaf3); border: 1px solid #cfd8e3; border-left: 0; border-radius: 0 12px 12px 0; position: relative; }
.quick-caret { position: absolute; left: 234px; color: #444; font-size: 10px; }
.title-text { font-size: 12.500px; color: #2a2a2a; line-height: 26px; white-space: nowrap; }
.minimize { display: flex; justify-content: flex-end; padding-right: 15px; }
.minimize span { width: 10px; height: 1px; background: #777; }

.menubar { height: 24px; flex: none; display: flex; align-items: center; justify-content: space-between; background: linear-gradient(#b4d2f4, #bfd9f6); font-size: 11px; color: #1f3553; }
.menu-left { display: flex; align-items: center; gap: 23px; padding-left: 4px; }
.menu-left svg { margin-left: 1px; }
.menu-right { display: flex; align-items: center; padding-right: 12px; font-size: 12px; color: #111; }
.combo { position: relative; height: 22px; align-self: flex-end; box-sizing: border-box; padding-left: 2px; line-height: 21px; background: #fff; border: 1px solid #8e9aa8; border-bottom: 0; color: #444; font-size: 11.500px; }
.c1 { width: 125px; margin-left: 4px; }
.c2 { width: 72px; }
.c3 { width: 119px; margin-left: 4px; }
.m1 { margin-left: 1px; } .m3 { margin-left: 3px; } .m4 { margin-left: 4px; } .m7 { margin-left: 7px; } .m8 { margin-left: 8px; } .m9 { margin-left: 9px; } .m11 { margin-left: 11px; } .m12 { margin-left: 12px; }
.menu-sep { width: 1px; height: 20px; margin-left: 6px; background: #5c7c9f; }
.menu-caret { width: 10px; margin-left: 7px; font-size: 11px; line-height: 1; color: #111; }
.chev { position: absolute; right: 8px; top: 50%; width: 6px; height: 6px; margin-top: -5px; border: solid #565f68; border-width: 0 1.200px 1.200px 0; transform: rotate(45deg); }
.chev.up { transform: rotate(-135deg); margin-top: -1px; }

.ribbon { height: 93px; flex: none; box-sizing: border-box; display: flex; background: linear-gradient(#e5eef9 0, #d5e2f2 55%, #bdd2eb 100%); border-bottom: 1px solid #a9c3e0; }
.group { flex: none; box-sizing: border-box; display: flex; flex-direction: column; border-right: 1px solid #a9bdd6; margin-bottom: 3px; }
.g-body { flex: 1; display: flex; padding-top: 5px; min-height: 0; }
.g-label { height: 20px; line-height: 20px; text-align: center; font-size: 11px; color: #4c6a8a; white-space: nowrap; }
.col { flex: none; display: flex; flex-direction: column; }
.small { flex: none; height: 22px; display: flex; align-items: center; gap: 4px; font-size: 11px; color: #1e3350; white-space: nowrap; }
.small.off { color: #9ba7b5; }
.small.off svg { opacity: .85; }
.caret { font-weight: 400; font-size: 9px; color: #6e7c8c; line-height: 1; }
.caret.tight { margin-left: -3px; }
.caret.far { margin-left: 3px; }
.caret.low { display: block; text-align: center; margin-top: 3px; }
.large { display: flex; flex-direction: column; align-items: center; font-size: 11px; color: #1e3350; white-space: nowrap; padding-top: 2px; }
.large span { margin-top: 3px; line-height: 16px; }
.large.cut { align-items: flex-start; }
.large.cut svg { margin-left: -17px; }
.large.cut span { margin-left: -3px; }
.select-btn { flex: none; width: 42px; height: 66px; box-sizing: border-box; border: 1px solid #d9a85c; border-radius: 2px; background: linear-gradient(#fde4b4 0, #f9c67f 30%, #f5a347 53%, #fbd59a 57%, #f5a94f 78%, #fde0a8 100%); display: flex; flex-direction: column; align-items: center; }
.sel-icon { margin-top: 3px; }
.sel-text { width: 100%; border-top: 1px solid #d9a35e; padding-top: 1px; text-align: center; font-size: 11px; line-height: 14px; color: #2a3850; }

.work { flex: 1; min-height: 0; display: flex; }
.panel { width: 533px; flex: none; display: flex; flex-direction: column; background: #f0f0ee; }
.panel-head { height: 23px; flex: none; box-sizing: border-box; display: flex; align-items: center; justify-content: space-between; padding-right: 6px; background: linear-gradient(#fbfbf9, #ecece8); border-bottom: 1px solid #c6ccd2; }
.panel-title { margin-left: -7px; font-size: 12px; }
.panel-btns { display: flex; gap: 2px; }
.framed { box-sizing: border-box; width: 16px; height: 16px; border: 1px solid #a9b0b8; border-radius: 2px; background: #f6f6f4; }
.search-row { height: 22px; flex: none; box-sizing: border-box; display: flex; align-items: center; background: #f4f4f2; border-bottom: 1px solid #b49a6c; position: relative; }
.search-box { width: 104px; height: 21px; box-sizing: border-box; display: flex; align-items: center; justify-content: space-between; padding-right: 3px; background: #fff; border: 1px solid #b7bec6; border-left: 0; overflow: hidden; }
.search-box span { margin-left: -3px; font-size: 12px; color: #333; white-space: nowrap; margin-top: -2px; }
.t1 { margin-left: 5px; } .t2 { margin-left: 8px; } .t3 { margin-left: 10px; } .t4 { margin-left: 9px; } .t5 { margin-left: 7px; }

.table-wrap { height: 544px; flex: none; display: flex; border-bottom: 1px solid #767f88; background: #fff; overflow: hidden; }
.table { width: 513px; flex: none; }
.row { height: 18px; box-sizing: border-box; display: grid; grid-template-columns: 260px 32px 57px 57px 33px 41px 33px; border-bottom: 1px solid #b4c0cc; }
.cell { box-sizing: border-box; border-right: 1px solid #b4c0cc; display: flex; align-items: center; justify-content: center; overflow: hidden; white-space: nowrap; font-size: 12px; color: #111; line-height: 1; }
.row.head { background: linear-gradient(#f8fafc, #e6ecf3); border-bottom-color: #9fb0c2; }
.row.head .cell { color: #222; }
.row.head .name { background: linear-gradient(#ffdca8, #fcb768); border-right-color: #c9a36f; padding-right: 40px; }
.row.tinted { background: #dfeffc; }
.cell.blank { background: #fff; }
.cell.left { justify-content: flex-start; padding-left: 0; }
.cell.left em { font-style: normal; color: #5d7c9c; margin-left: -2px; margin-right: 6px; }
.cell.first { text-indent: -4px; }
.check { width: 11px; height: 11px; border: 1px solid #3c3c3c; background: #fff; }
.row.active { background: #0b95f3; border-bottom-color: #fff; }
.row.active .cell { border-right-color: #7cc6f8; justify-content: flex-end; }
.drop-btn { width: 13px; height: 14px; box-sizing: border-box; margin-right: 2px; padding: 2px; display: block; background: #e6e8ec; border: 1px solid #a7afb8; flex: none; }
.drop-btn svg { display: block; width: 100%; height: 100%; }
.row.plain { border-bottom-color: #c6ced6; }
.row.plain .cell { border-right-color: #c0c9d2; }
.hint { color: #8a8a8a; font-style: italic; font-size: 12px; padding-right: 38px; }
.vscroll { width: 17px; flex: none; position: relative; background: #f1f1f1; border-left: 1px solid #c8cdd3; box-sizing: border-box; }
.vscroll .chev { right: 5px; }
.vscroll .up { top: 10px; }
.vscroll .bottom { top: auto; bottom: 7px; }
.thumb { position: absolute; left: 0; right: 0; top: 18px; height: 16px; background: #cdcdcd; }

.tabs-row { height: 32px; flex: none; position: relative; box-sizing: border-box; background: #f3f3f1; border-bottom: 4px solid #e3e6e8; padding-top: 9px; }
.splitter { position: absolute; left: 199px; top: 0; width: 61px; height: 7px; background: #8fb2dc; border-radius: 0 0 4px 4px; display: flex; justify-content: center; }
.splitter b { width: 0; height: 0; border: 4px solid transparent; border-top-color: #fff; border-bottom: 0; margin-top: 2px; }
.addon { display: block; width: 58px; height: 19px; box-sizing: border-box; padding-left: 6px; border-right: 1px solid #d5d8da; border-bottom: 1px solid #c4c9ce; font-size: 12px; line-height: 18px; color: #444; }

.form { flex: 1; min-height: 0; background: linear-gradient(#dbeafb, #e3effc); padding-top: 1px; }
.sel { position: relative; box-sizing: border-box; background: #fff; border: 1px solid #838b93; font-size: 12px; }
.sel span:not(.drop-btn) { margin-left: 3px; line-height: 16px; }
.sel.full { margin-left: -2px; width: 529px; }
.h24 { height: 24px; } .h20 { height: 20px; } .h18 { height: 18px; }
.line { display: flex; align-items: flex-start; margin-top: 2px; margin-left: -2px; }
.line label { margin-left: auto; width: 50px; text-align: right; font-size: 12px; line-height: 18px; color: #333; margin-right: 5px; }
.l3 { margin-top: 3px; }
.w315 { width: 315px; }
.w410 { width: 410px; height: 18px; display: flex; align-items: center; justify-content: flex-end; }
.mini { width: 59px; margin-right: 8px; flex: none; }
.memo { position: relative; margin-top: 2px; margin-left: -2px; width: 529px; height: 50px; box-sizing: border-box; background: #f0f0f0; border: 1px solid #a9b0b6; }
.memo-bar { position: absolute; right: 0; top: 0; bottom: 0; width: 17px; background: #f5f5f5; }
.memo-bar .chev { border-color: #bcc3ca; right: 5px; }
.memo-bar .up { top: 9px; }
.memo-bar .chev:not(.up) { top: auto; bottom: 9px; }
.fields { display: flex; flex-direction: column; gap: 2.200px; margin-top: 1px; }
.field { display: flex; height: 20px; align-items: center; margin-left: -2px; }
.inp { width: 239px; height: 18px; box-sizing: border-box; background: #fff; border: 1px solid #838b93; flex: none; display: flex; justify-content: flex-end; align-items: center; }
.inp.gray { background: #f0efee; }
.field label { width: 36px; flex: none; text-align: right; padding-right: 3px; box-sizing: border-box; font-size: 12px; color: #333; }
.sel.grow { width: 254px; height: 20px; flex: none; }
.sel.disabled { background: #e0e0e0; border-color: #bdbdbd; }
.sel.muted { border-color: #ccd3da; }
.sel.muted .chev { border-color: #b0b8c0; }
.last { margin-top: 4px; height: 19px; }

.divider { width: 2px; flex: none; background: #f0daa0; }
.doc { flex: 1; min-width: 0; display: flex; flex-direction: column; }
.doc-tabs { height: 25px; flex: none; box-sizing: border-box; padding: 1px 0 0 4px; display: flex; background: #a4c7ee; }
.doc-tab { height: 23px; box-sizing: border-box; padding: 0 3px; display: flex; align-items: center; font-size: 12px; color: #222; background: #e0ebf7; border: 1px solid #90a9c6; border-left-color: #c3d4e8; white-space: nowrap; }
.doc-tab:first-child { width: 58px; justify-content: center; }
.doc-tab.on { width: 92px; background: #fdb86d; padding-left: 4px; color: #4b3a20; border-color: #f1a95e; justify-content: flex-start; gap: 4px; }
.doc-tab.add { width: 27px; justify-content: center; }
.cmd { height: 20px; flex: none; padding-left: 1px; line-height: 17px; font-size: 11.500px; background: #fff; color: #222; }
.canvas { flex: 1; min-height: 0; background: #03170f; overflow: hidden; }
.cad { display: block; width: 100%; height: 100%; }
.dim { font-family: "DejaVu Sans", "Noto Sans CJK SC", sans-serif; fill: #7d9a90; }
.axis { font-family: "Liberation Sans", sans-serif; font-size: 14px; fill: #fff; }
.status { height: 24px; flex: none; display: flex; align-items: center; background: linear-gradient(90deg, #cfdcf1, #c6d4ee); font-size: 12px; color: #222; }
.coords { width: 120px; flex: none; padding-left: 13px; font-family: "Liberation Sans", sans-serif; font-size: 12.500px; box-sizing: border-box; white-space: nowrap; }
.snaps { display: flex; gap: 1px; }
.snap { width: 22px; height: 24px; display: flex; align-items: center; justify-content: center; }
.snap.on { background: #ffb45f; }
.stat-sep { width: 1px; height: 20px; margin: 0 2px; background: #6a7f99; flex: none; }
.stat-sep.lead { margin-left: 3px; }
.view { height: 24px; flex: none; display: flex; align-items: center; justify-content: center; }
.view.on { background: #ffb45f; }
.tone { margin-left: auto; padding-right: 9px; display: flex; align-items: center; gap: 5px; }
.tone svg { width: 10px; height: 10px; }

.taskbar { height: 30px; flex: none; display: flex; align-items: center; background: #d4e2e8; font-size: 12px; color: #333; position: relative; }
.peng { margin-left: -7px; }
.ie { margin-left: 20px; }
.task { height: 30px; box-sizing: border-box; display: flex; align-items: center; gap: 4px; padding-left: 4px; border-bottom: 2px solid #b39a6d; white-space: nowrap; }
.t-a { margin-left: 14px; width: 152px; }
.t-b { margin-left: 9px; width: 152px; }
.t-c { margin-left: 4px; width: 170px; padding-left: 9px; background: #e5eff5; border-bottom-color: #e0d9b8; }
.tray { margin-left: auto; padding-right: 4px; display: flex; align-items: center; }
.tray-i { width: 32px; height: 30px; display: flex; align-items: center; justify-content: center; }
.narrow2 { width: 30px; }
.narrow { width: 26px; }
.ime { font-size: 14px; color: #333; }

.banner { position: absolute; left: 353px; top: 480px; width: 1032px; height: 178px; display: flex; align-items: center; justify-content: center; padding-bottom: 19px; box-sizing: border-box; }
.banner-bg { position: absolute; inset: 0; clip-path: polygon(0 0, 1028px 0, 1020px 78px, 1032px 78px, 1021px 140px, 1004px 178px, 0 178px); background: linear-gradient(90deg, rgba(0,0,0,0) 0, rgba(30,30,30,.35) 8%, rgba(20,20,20,.7) 14%, rgba(15,15,15,.92) 17.500%, #020202 30%, #000 100%); }
.banner-bg::after { content: ""; position: absolute; inset: 0; background: repeating-conic-gradient(rgba(50,50,78,.42) 0 25%, transparent 0 50%) 0 0 / 9px 9px; -webkit-mask-image: linear-gradient(100deg, transparent 62%, rgba(0,0,0,.35) 80%, #000 100%); mask-image: linear-gradient(100deg, transparent 62%, rgba(0,0,0,.35) 80%, #000 100%); }
.headline { position: relative; flex: none; transform: translateX(8px) skewX(-9deg) scaleX(.925); }
.title { margin: 0; font-family: "Noto Sans CJK SC", sans-serif; font-size: 138px; font-weight: 900; line-height: 1; white-space: nowrap; color: transparent; -webkit-text-stroke: 2px transparent; background: linear-gradient(180deg, #fbc97c 5%, #ffe184 45%, #fdc67b 95%); -webkit-background-clip: text; background-clip: text; filter: drop-shadow(0 2px 2px rgba(0,0,0,.45)); position: relative; }
.ghost { position: absolute; left: -22px; top: 17px; font-size: 106px; font-weight: 900; line-height: 1; white-space: nowrap; color: transparent; background: linear-gradient(90deg, #e9d172 0, #a89450 40%, #4c4628 100%); -webkit-background-clip: text; background-clip: text; }
</style>
